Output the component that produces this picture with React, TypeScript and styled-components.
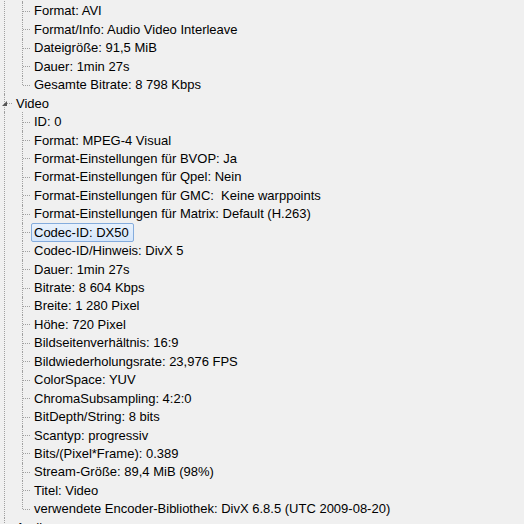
import { createGlobalStyle, styled } from "styled-components"

const GlobalStyle = createGlobalStyle`
    html, body {
        margin: 0;
        padding: 0;
        background: #f0f0f0;
        overflow: hidden;
    }
`

const ROW_HEIGHT = 18.45
const LINE = '#a0a0a0'

const TreePanel = styled.div`
    width: 524px;
    height: 524px;
    overflow: hidden;
    background: #f0f0f0;
    font-family: "Liberation Sans", Arial, sans-serif;
    font-size: 13px;
    color: #000;
`

const TreeList = styled.div`
    display: flex;
    flex-direction: column;
    margin-top: -16.7px;
`

const RootRow = styled.div`
    display: flex;
    align-items: center;
    height: ${ ROW_HEIGHT }px;
    padding-left: 4px;
    white-space: pre;
`

const ChildGroup = styled.div<{ $continues: boolean }>`
    display: flex;
    flex-direction: column;
    margin-left: 4px;
    border-left: 1px dotted ${ p => p.$continues ? LINE : 'transparent' };
`

const ChildRow = styled.div`
    display: flex;
    align-items: center;
    height: ${ ROW_HEIGHT }px;
    padding-left: 17px;
    white-space: pre;
`

const Connector = styled.span<{ $last?: boolean }>`
    position: relative;
    flex: none;
    width: 8px;
    align-self: stretch;

    &::before {
        content: '';
        position: absolute;
        left: 0;
        top: 0;
        bottom: ${ p => p.$last ? '50%' : '0' };
        border-left: 1px dotted ${ LINE };
    }

    &::after {
        content: '';
        position: absolute;
        left: 1px;
        right: 0;
        top: 50%;
        border-top: 1px dotted ${ LINE };
    }
`

const Expander = styled.svg`
    position: absolute;
    left: -3px;
    top: 50%;
    margin-top: -3px;
    z-index: 1;
`

const Label = styled.span<{ $selected?: boolean }>`
    display: flex;
    align-items: center;
    height: 19px;
    box-sizing: border-box;
    padding: 0 4px 0 2px;
    margin-left: 1px;
    border: 1px solid ${ p => p.$selected ? '#84acdd' : 'transparent' };
    border-radius: 2px;
    background: ${ p => p.$selected ? 'linear-gradient(#e8f1fc, #d5e6fb)' : 'transparent' };
`

const RootLabel = styled(Label)`
    padding-left: 2px;
`

type Section = {
    title: string
    open: boolean
    items: string[]
}

const sections: Section[] = [
    {
        title: 'Allgemein',
        open: true,
        items: [
            'Vollständiger Name: D:\\Filme\\Videos 2009\\DivX\\Urlaub_2009_Teil_1_HD.avi',
            'Format: AVI',
            'Format/Info: Audio Video Interleave',
            'Dateigröße: 91,5 MiB',
            'Dauer: 1min 27s',
            'Gesamte Bitrate: 8 798 Kbps',
        ],
    },
    {
        title: 'Video',
        open: true,
        items: [
            'ID: 0',
            'Format: MPEG-4 Visual',
            'Format-Einstellungen für BVOP: Ja',
            'Format-Einstellungen für Qpel: Nein',
            'Format-Einstellungen für GMC:  Keine warppoints',
            'Format-Einstellungen für Matrix: Default (H.263)',
            'Codec-ID: DX50',
            'Codec-ID/Hinweis: DivX 5',
            'Dauer: 1min 27s',
            'Bitrate: 8 604 Kbps',
            'Breite: 1 280 Pixel',
            'Höhe: 720 Pixel',
            'Bildseitenverhältnis: 16:9',
            'Bildwiederholungsrate: 23,976 FPS',
            'ColorSpace: YUV',
            'ChromaSubsampling: 4:2:0',
            'BitDepth/String: 8 bits',
            'Scantyp: progressiv',
            'Bits/(Pixel*Frame): 0.389',
            'Stream-Größe: 89,4 MiB (98%)',
            'Titel: Video',
            'verwendete Encoder-Bibliothek: DivX 6.8.5 (UTC 2009-08-20)',
        ],
    },
    {
        title: 'Audio',
        open: false,
        items: [],
    },
]

const SELECTED = 'Codec-ID: DX50'

const ExpandIcon = ({ open }: { open: boolean }) => (
    <Expander width="7" height="7" viewBox="0 0 7 7">
        { open ?
            <polygon points="6,1 6,6 1,6" fill="#575757" />
        :
            <polygon points="1.5,0.5 5.5,3.5 1.5,6.5" fill="none" stroke="#8a8a8a" />
        }
    </Expander>
)

const App = () => {
    return (
        <>
            <GlobalStyle />
            <TreePanel>
                <TreeList>
                    { sections.map((section, index) => {
                        const isLastRoot = index === sections.length - 1
                        const visibleRoot = index > 0
                        return (
                            <div key={section.title}>
                                { visibleRoot &&
                                    <RootRow>
                                        <Connector $last={isLastRoot}>
                                            <ExpandIcon open={section.open} />
                                        </Connector>
                                        <RootLabel>{section.title}</RootLabel>
                                    </RootRow>
                                }
                                { section.open &&
                                    <ChildGroup $continues={!isLastRoot}>
                                        { section.items.map((item, i) => (
                                            <ChildRow key={item + i}>
                                                <Connector $last={i === section.items.length - 1} />
                                                <Label $selected={item === SELECTED}>{item}</Label>
                                            </ChildRow>
                                        )) }
                                    </ChildGroup>
                                }
                            </div>
                        )
                    }) }
                </TreeList>
            </TreePanel>
        </>
    )
}

export default App
